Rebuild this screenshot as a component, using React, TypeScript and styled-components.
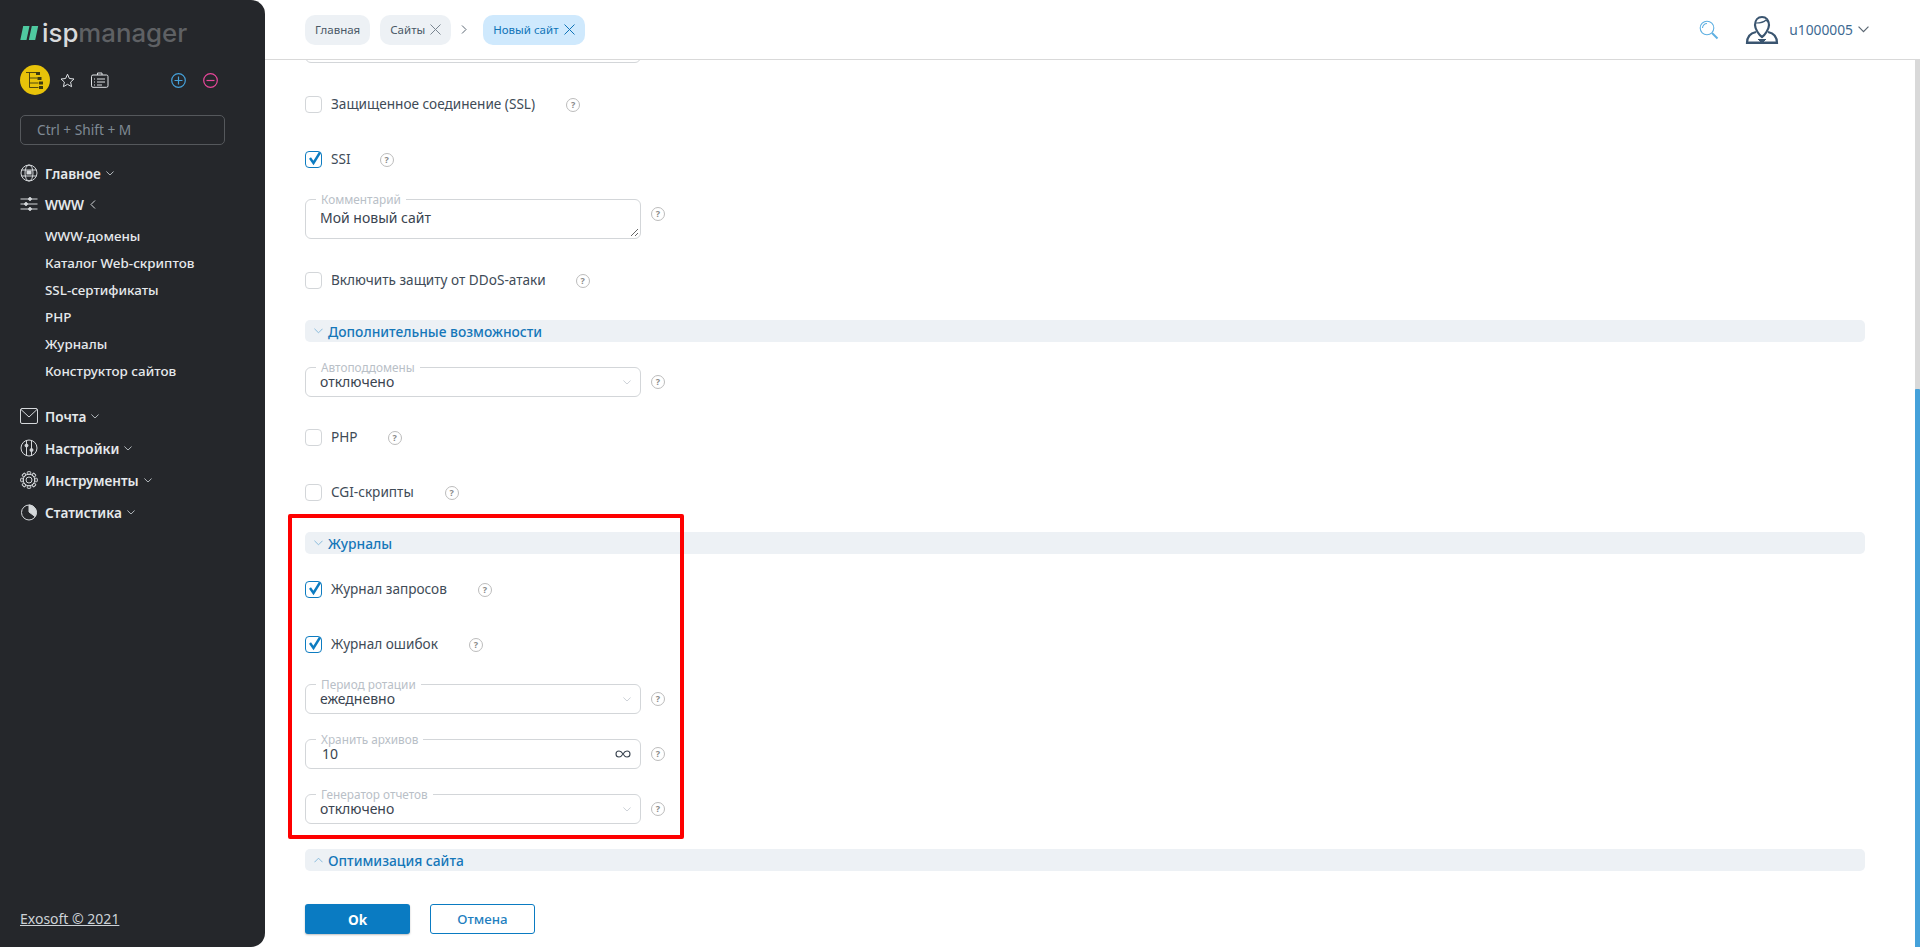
import React from "react";
import styled, { createGlobalStyle } from "styled-components";

const Global = createGlobalStyle`
  html, body { margin: 0; padding: 0; height: 100%; overflow: hidden; background: #fff; }
  body { font-family: "Noto Sans", "Open Sans", sans-serif; }
  * { box-sizing: border-box; }
`;

const Shell = styled.div`display: flex; width: 1920px; height: 947px; position: relative; overflow: hidden; background: #fff;`;
const Side = styled.aside`
  width: 265px; flex: none; height: 947px; background: #25272b; border-radius: 0 14px 14px 0;
  padding: 17px 0 0 20px; display: flex; flex-direction: column; color: #e6e9ec;
`;
const LogoRow = styled.div`display: flex; align-items: center; height: 32px; gap: 3px;`;
const LogoText = styled.div`font-family: "Inter", sans-serif; font-size: 25.8px; line-height: 32px; font-weight: 500; color: #5f6164;
  b { font-weight: 500; color: #d8dadc; }`;
const Tools = styled.div`display: flex; align-items: center; height: 30px; margin-top: 16px;`;
const Round = styled.div`width: 30px; height: 30px; border-radius: 50%; background: #e8c30a; display: flex; align-items: center; justify-content: center;`;
const ToolIcon = styled.span<{ $ml: number }>`display: flex; margin-left: ${p => p.$ml}px;`;
const Search = styled.div`
  width: 205px; height: 30px; margin-top: 20px; border: 1px solid #55585c; border-radius: 5px; padding-left: 16px;
  font-size: 13.7px; line-height: 28px; color: #7f8a94;
`;
const Nav = styled.nav`display: flex; flex-direction: column; margin-top: 12px;`;
const NavItem = styled.div<{ $h?: number }>`
  display: flex; align-items: center; height: ${p => p.$h ?? 32}px; font-size: 13.6px; font-weight: 600; color: #e6e9ec;
  svg.ic { width: 18px; height: 18px; margin-right: 7px; flex: none; }
`;
const Sub = styled.div`height: 27px; line-height: 27px; padding-left: 25px; font-size: 13.4px; font-weight: 500; color: #e6e9ec;`;
const SubList = styled.div`display: flex; flex-direction: column; margin-bottom: 15px; margin-top: 4px;`;
const Foot = styled.a`margin-top: auto; margin-bottom: 18px; font-size: 14px; line-height: 20px; color: #cdd2d7; text-decoration: underline; align-self: flex-start;`;

const Main = styled.main`flex: 1; display: flex; flex-direction: column; min-width: 0; height: 947px;`;
const Header = styled.header`
  height: 60px; flex: none; border-bottom: 1px solid #d9d9d9; display: flex; align-items: center; padding: 0 51px 0 40px; background: #fff;
`;
const Tab = styled.div<{ $active?: boolean }>`
  height: 30px; border-radius: 10px; padding: 0 10px; display: flex; align-items: center; gap: 5px; font-size: 11.5px;
  background: ${p => (p.$active ? "#cfe9fd" : "#edf1f5")}; color: ${p => (p.$active ? "#0f74b8" : "#4a5866")};
  margin-right: ${p => (p.$active ? 0 : 10)}px;
`;
const Crumb = styled.span`width: 22px; display: flex; color: #5a6672;`;
const HeaderRight = styled.div`margin-left: auto; display: flex; align-items: center;`;
const UserName = styled.span`font-size: 13.8px; color: #3e6a92; margin-left: 10px;`;

const Body = styled.div`flex: 1; display: flex; min-height: 0; position: relative;`;
const Content = styled.div`flex: 1; overflow: hidden; padding: 0 50px 0 40px; display: flex; flex-direction: column;`;
const Scroll = styled.div`width: 5px; flex: none; background: #d9d9d9; display: flex; flex-direction: column; justify-content: flex-end;`;
const Thumb = styled.div`height: 558px; background: #45a1da; border-radius: 1px 1px 0 0;`;

const Row = styled.div<{ $gap: number }>`display: flex; align-items: center; margin-top: ${p => p.$gap}px; flex: none;`;
const Box = styled.span<{ $on?: boolean }>`
  width: 17px; height: 17px; flex: none; border-radius: 4px; border: 1px solid ${p => (p.$on ? "#0d7cc1" : "#d3d6d9")};
  display: flex; align-items: center; justify-content: center; background: #fff;
`;
const CheckText = styled.span`font-size: 13.6px; line-height: 17px; color: #404b57; margin-left: 9px; position: relative; top: -1px;`;
const Help = styled.span<{ $ml: number; $up?: number }>`
  width: 14px; height: 14px; flex: none; border-radius: 50%; border: 1px solid #bcbcbc; margin-left: ${p => p.$ml}px;
  font-size: 9px; line-height: 12px; text-align: center; font-weight: 700; color: #8a8a8a;
  margin-bottom: ${p => p.$up ?? 0}px;
`;
const Field = styled.div<{ $h?: number; $pt?: number }>`
  position: relative; width: 336px; height: ${p => p.$h ?? 30}px; flex: none; border: 1px solid #d3d6d9; border-radius: 6px; background: #fff;
  display: flex; align-items: flex-start; justify-content: space-between; padding: ${p => p.$pt ?? 5}px 9px 0 14px;
`;
const Legend = styled.span`
  position: absolute; left: 10px; top: -7px; padding: 0 5px; background: #fff; font-size: 11.8px; line-height: 13px; color: #b9c0c7; white-space: nowrap;
`;
const Value = styled.span<{ $nudge?: number }>`font-size: 14px; line-height: 18px; color: #3a4450; margin-left: ${p => p.$nudge ?? 0}px;`;
const EndIcon = styled.span`display: flex; align-items: center; height: 18px;`;
const Resize = styled.svg`position: absolute; right: 1px; bottom: 1px;`;
const Section = styled.div<{ $gap: number }>`
  height: 22px; flex: none; margin-top: ${p => p.$gap}px; border-radius: 5px; background: #edf1f5; display: flex; align-items: center; padding-left: 9px; gap: 5px;
  font-size: 13.8px; font-weight: 500; color: #1577b9;
`;
const Buttons = styled.div`display: flex; gap: 20px; margin-top: 33px; flex: none;`;
const Ok = styled.button`width: 105px; height: 30px; border: 0; border-radius: 3px; background: #0a7bc2; color: #fff; font: 700 13.6px "Noto Sans", sans-serif; box-shadow: 0 1px 2px rgba(0,0,0,.25);`;
const Cancel = styled.button`width: 105px; height: 30px; border: 1px solid #0a7bc2; border-radius: 3px; background: #fff; color: #1f7fc0; font: 500 13.3px "Noto Sans", sans-serif;`;
const RedBox = styled.div`position: absolute; left: 288px; top: 514px; width: 396px; height: 325px; border: 4px solid #fe0000; border-radius: 2px; pointer-events: none;`;

const Chev = ({ c = "#c9ced3", up = false, size = 8 }: { c?: string; up?: boolean; size?: number }) => (
  <svg width={size} height={size * 0.62} viewBox="0 0 10 6" fill="none" stroke={c} strokeWidth="1.1" style={{ flex: "none", marginLeft: 5 }}>
    <path d={up ? "M.5 5.5 5 1l4.5 4.5" : "M.5.5 5 5 9.5.5"} />
  </svg>
);
const Ic = ({ children }: { children: React.ReactNode }) => (
  <svg className="ic" viewBox="0 0 18 18" fill="none" stroke="#d5d8db" strokeWidth="1">{children}</svg>
);
const Tick = () => (
  <svg width="15" height="15" viewBox="0 0 15 15" fill="none" stroke="#0d7cc1" strokeWidth="2.4" style={{ marginTop: -3, marginRight: -1 }}><path d="M3 7l3.500 5L13 1.500" /></svg>
);
const X = ({ c }: { c: string }) => (
  <svg width="11" height="11" viewBox="0 0 11 11" fill="none" stroke={c} strokeWidth="1"><path d="M.5.5l10 10M10.500.5l-10 10" /></svg>
);

const Check = ({ gap, on, text, ml }: { gap: number; on?: boolean; text: string; ml: number }) => (
  <Row $gap={gap}>
    <Box $on={on}>{on && <Tick />}</Box>
    <CheckText>{text}</CheckText>
    <Help $ml={ml}>?</Help>
  </Row>
);
const Select = ({ gap, label, value }: { gap: number; label: string; value: string }) => (
  <Row $gap={gap}>
    <Field>
      <Legend>{label}</Legend>
      <Value>{value}</Value>
      <EndIcon><Chev c="#c5cbd1" /></EndIcon>
    </Field>
    <Help $ml={10}>?</Help>
  </Row>
);
const Sec = ({ gap, text, up }: { gap: number; text: string; up?: boolean }) => (
  <Section $gap={gap}>
    <svg width="9" height="6" viewBox="0 0 10 6" fill="none" stroke="#7fb6da" strokeWidth="1"><path d={up ? "M.5 5.500 5 1l4.500 4.500" : "M.5.5 5 5 9.500.5"} /></svg>
    {text}
  </Section>
);

const gearTeeth = Array.from({ length: 8 }, (_, i) => i * 45);

export default function App() {
  return (
    <Shell>
      <Global />
      <Side>
        <LogoRow>
          <svg width="19" height="15" viewBox="0 0 19 15" fill="#4fc9a0"><path d="M3.200 0h6.300L6.500 14H.3zM11.800 0h6.400l-3 14H8.800z" /></svg>
          <LogoText><b>isp</b>manager</LogoText>
        </LogoRow>
        <Tools>
          <Round>
            <svg width="18" height="17" viewBox="0 0 18 17" fill="none" stroke="#3d3a10" strokeWidth=".9">
              <path d="M0 .5h10M3.500.5V15.500M3.500 6h8M3.500 11h9M3.500 15.500h9" />
              <g fill="#3d3a10" stroke="none">
                <rect x="10" y="0" width="4" height="3" />
                <rect x="11.500" y="5" width="4" height="3" />
                <rect x="13" y="9.500" width="4" height="3" />
                <rect x="13" y="14" width="4" height="3" />
              </g>
            </svg>
          </Round>
          <ToolIcon $ml={10}>
            <svg width="15" height="15" viewBox="0 0 15 15" fill="none" stroke="#dfe2e5"><path d="M7.500 1.200 9.400 5.500l4.600.5-3.400 3.100 1 4.600-4.100-2.400-4.100 2.400 1-4.600L1 6l4.600-.5z" /></svg>
          </ToolIcon>
          <ToolIcon $ml={16}>
            <svg width="18" height="16" viewBox="0 0 18 16" fill="none" stroke="#dfe2e5"><rect x=".5" y="3" width="16.500" height="12.300" rx="1.500" /><path d="M6.500 3V1h4.500v2M3 7h1M6 7h8M3 10h1M6 10h8M3 13h1M6 13h5" /></svg>
          </ToolIcon>
          <ToolIcon $ml={62}>
            <svg width="15" height="15" viewBox="0 0 15 15" fill="none" stroke="#45a1da" strokeWidth="1.200"><circle cx="7.500" cy="7.500" r="6.800" /><path d="M7.500 3.500v8M3.500 7.500h8" /></svg>
          </ToolIcon>
          <ToolIcon $ml={17}>
            <svg width="15" height="15" viewBox="0 0 15 15" fill="none" stroke="#e8479a" strokeWidth="1.200"><circle cx="7.500" cy="7.500" r="6.800" /><path d="M3.500 7.500h8" /></svg>
          </ToolIcon>
        </Tools>
        <Search>Ctrl + Shift + M</Search>
        <Nav>
          <NavItem>
            <Ic><circle cx="9" cy="9" r="8" /><ellipse cx="9" cy="9" rx="4" ry="8" /><path d="M1.500 6h15M1.500 12h15" /><rect x="6.500" y="6.500" width="5" height="4" fill="#d5d8db" stroke="none" /></Ic>
            Главное<Chev />
          </NavItem>
          <NavItem $h={30}>
            <Ic><path d="M.5 4h17M.5 9h17M.5 14h17" /><circle cx="10" cy="4" r="1.400" fill="#d5d8db" /><circle cx="6" cy="9" r="1.400" fill="#d5d8db" /><circle cx="10" cy="14" r="1.400" fill="#d5d8db" /></Ic>
            WWW
            <svg width="6" height="9" viewBox="0 0 6 9" fill="none" stroke="#d5d8db" style={{ marginLeft: 6 }}><path d="M5 .5 1 4.500l4 4" /></svg>
          </NavItem>
          <SubList>
            <Sub>WWW-домены</Sub>
            <Sub>Каталог Web-скриптов</Sub>
            <Sub>SSL-сертификаты</Sub>
            <Sub>PHP</Sub>
            <Sub>Журналы</Sub>
            <Sub>Конструктор сайтов</Sub>
          </SubList>
          <NavItem>
            <Ic><rect x=".5" y="1.500" width="17" height="15" rx="1.500" /><path d="M1 2.500 9 10l8-7.500" /></Ic>
            Почта<Chev />
          </NavItem>
          <NavItem>
            <Ic><circle cx="9" cy="9" r="8" /><path d="M6.500 1.500v15M11.500 1.500v15" /><circle cx="6.500" cy="6.500" r="1.500" fill="#d5d8db" /><circle cx="11.500" cy="11" r="1.500" fill="#d5d8db" /></Ic>
            Настройки<Chev />
          </NavItem>
          <NavItem>
            <Ic>
              <circle cx="9" cy="9" r="3" />
              <circle cx="9" cy="9" r="5.800" />
              {gearTeeth.map(a => (
                <rect key={a} x="7.300" y=".7" width="3.400" height="2.600" rx=".6" transform={`rotate(${a} 9 9)`} />
              ))}
            </Ic>
            Инструменты<Chev />
          </NavItem>
          <NavItem>
            <Ic><circle cx="9" cy="9.500" r="7.500" /><path d="M9 2a7.500 7.500 0 0 1 6 11.500L9 9z" fill="#d5d8db" /></Ic>
            Статистика<Chev />
          </NavItem>
        </Nav>
        <Foot>Exosoft © 2021</Foot>
      </Side>
      <Main>
        <Header>
          <Tab>Главная</Tab>
          <Tab>Сайты<X c="#7a8691" /></Tab>
          <Crumb>
            <svg width="6" height="9" viewBox="0 0 6 9" fill="none" stroke="#5a6672"><path d="M1 .5l4 4-4 4" /></svg>
          </Crumb>
          <Tab $active>Новый сайт<X c="#0f74b8" /></Tab>
          <HeaderRight>
            <svg width="20" height="20" viewBox="0 0 20 20" fill="none" stroke="#5fb0e2" strokeWidth="1.100"><circle cx="8" cy="8" r="6.800" /><path d="M3.500 8A4.500 4.500 0 0 1 8 3.500" /><path d="M13 13l5.500 5.500" strokeWidth="2" /></svg>
            <svg width="34" height="30" viewBox="0 0 34 30" fill="none" stroke="#3a5570" strokeWidth="2.200" style={{ marginLeft: 26 }}>
              <path d="M10 10c0-5 3-8 7-8s7 3 7 8c0 4-4 10-7 12-3-2-7-8-7-12z" />
              <path d="M11 8c4 0 8-1 10-3 1 1 2 2 3 3" strokeWidth="1.200" />
              <path d="M11 17c-5 1-9 4-9 11h30c0-7-4-10-9-11" />
              <path d="M13 24l4 4 4-4" fill="#3a5570" strokeWidth="1" />
              <path d="M2 27.500h30" strokeWidth="2" />
            </svg>
            <UserName>u1000005</UserName>
            <Chev c="#5a6672" size={11} />
          </HeaderRight>
        </Header>
        <Body>
          <Content>
            <Row $gap={-27}><Field /></Row>
            <Check gap={33} text="Защищенное соединение (SSL)" ml={31} />
            <Check gap={38} on text="SSI" ml={29} />
            <Row $gap={31}>
              <Field $h={40} $pt={9}>
                <Legend>Комментарий</Legend>
                <Value>Мой новый сайт</Value>
                <Resize width="9" height="9" viewBox="0 0 9 9" stroke="#666"><path d="M1 8l7-7M5 8l3-3" /></Resize>
              </Field>
              <Help $ml={10} $up={10}>?</Help>
            </Row>
            <Check gap={33} text="Включить защиту от DDoS-атаки" ml={30} />
            <Sec gap={31} text="Дополнительные возможности" />
            <Select gap={25} label="Автоподдомены" value="отключено" />
            <Check gap={32} text="PHP" ml={30} />
            <Check gap={38} text="CGI-скрипты" ml={31} />
            <Sec gap={31} text="Журналы" />
            <Check gap={27} on text="Журнал запросов" ml={31} />
            <Check gap={38} on text="Журнал ошибок" ml={31} />
            <Select gap={31} label="Период ротации" value="ежедневно" />
            <Row $gap={25}>
              <Field>
                <Legend>Хранить архивов</Legend>
                <Value $nudge={2}>10</Value>
                <EndIcon>
                  <svg width="16" height="8" viewBox="0 0 16 8" fill="none" stroke="#3a4450" strokeWidth="1.100"><path d="M8 4C6.500 1.500 5.500 1 4 1a3 3 0 0 0 0 6c1.500 0 2.500-.5 4-3zm0 0c1.500-2.500 2.500-3 4-3a3 3 0 0 1 0 6c-1.500 0-2.500-.5-4-3z" /></svg>
                </EndIcon>
              </Field>
              <Help $ml={10}>?</Help>
            </Row>
            <Select gap={25} label="Генератор отчетов" value="отключено" />
            <Sec gap={25} text="Оптимизация сайта" up />
            <Buttons><Ok>Ok</Ok><Cancel>Отмена</Cancel></Buttons>
          </Content>
          <Scroll><Thumb /></Scroll>
        </Body>
      </Main>
      <RedBox />
    </Shell>
  );
}
